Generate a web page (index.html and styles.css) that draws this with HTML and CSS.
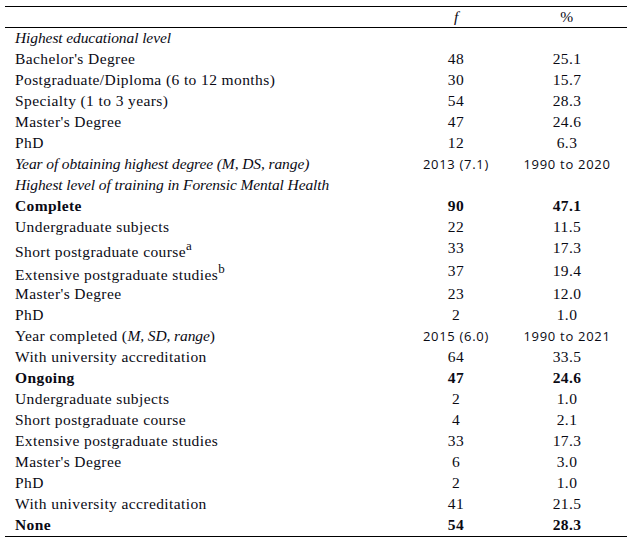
FILE: index.html
```html
<!DOCTYPE html>
<html>
<head>
<meta charset="utf-8">
<link rel="stylesheet" href="styles.css">
</head>
<body>
<table class="tbl">
  <colgroup>
    <col class="c-lbl">
    <col class="c-f">
    <col class="c-pct">
  </colgroup>
  <thead>
    <tr class="head"><th class="lbl"></th><th class="num"><i>f</i></th><th class="num pct">%</th></tr>
  </thead>
  <tbody>
    <tr><td class="lbl"><i>Highest educational level</i></td><td></td><td class="pct"></td></tr>
    <tr><td class="lbl">Bachelor's Degree</td><td class="num">48</td><td class="num pct">25.1</td></tr>
    <tr><td class="lbl">Postgraduate/Diploma (6 to 12 months)</td><td class="num">30</td><td class="num pct">15.7</td></tr>
    <tr><td class="lbl">Specialty (1 to 3 years)</td><td class="num">54</td><td class="num pct">28.3</td></tr>
    <tr><td class="lbl">Master's Degree</td><td class="num">47</td><td class="num pct">24.6</td></tr>
    <tr><td class="lbl">PhD</td><td class="num">12</td><td class="num pct">6.3</td></tr>
    <tr><td class="lbl"><i>Year of obtaining highest degree (M, DS, range)</i></td><td class="num sans">2013 (7.1)</td><td class="num pct sans">1990 to 2020</td></tr>
    <tr><td class="lbl"><i>Highest level of training in Forensic Mental Health</i></td><td></td><td class="pct"></td></tr>
    <tr class="bold"><td class="lbl">Complete</td><td class="num">90</td><td class="num pct">47.1</td></tr>
    <tr><td class="lbl">Undergraduate subjects</td><td class="num">22</td><td class="num pct">11.5</td></tr>
    <tr class="tall"><td class="lbl">Short postgraduate course<sup>a</sup></td><td class="num">33</td><td class="num pct">17.3</td></tr>
    <tr class="tall"><td class="lbl">Extensive postgraduate studies<sup>b</sup></td><td class="num">37</td><td class="num pct">19.4</td></tr>
    <tr><td class="lbl">Master's Degree</td><td class="num">23</td><td class="num pct">12.0</td></tr>
    <tr><td class="lbl">PhD</td><td class="num">2</td><td class="num pct">1.0</td></tr>
    <tr><td class="lbl">Year completed (<i>M, SD, range</i>)</td><td class="num sans">2015 (6.0)</td><td class="num pct sans">1990 to 2021</td></tr>
    <tr><td class="lbl">With university accreditation</td><td class="num">64</td><td class="num pct">33.5</td></tr>
    <tr class="bold"><td class="lbl">Ongoing</td><td class="num">47</td><td class="num pct">24.6</td></tr>
    <tr><td class="lbl">Undergraduate subjects</td><td class="num">2</td><td class="num pct">1.0</td></tr>
    <tr><td class="lbl">Short postgraduate course</td><td class="num">4</td><td class="num pct">2.1</td></tr>
    <tr><td class="lbl">Extensive postgraduate studies</td><td class="num">33</td><td class="num pct">17.3</td></tr>
    <tr><td class="lbl">Master's Degree</td><td class="num">6</td><td class="num pct">3.0</td></tr>
    <tr><td class="lbl">PhD</td><td class="num">2</td><td class="num pct">1.0</td></tr>
    <tr><td class="lbl">With university accreditation</td><td class="num">41</td><td class="num pct">21.5</td></tr>
    <tr class="bold"><td class="lbl">None</td><td class="num">54</td><td class="num pct">28.3</td></tr>
  </tbody>
</table>
</body>
</html>
```

FILE: styles.css
```css
html, body {
  margin: 0;
  padding: 0;
  background: #fff;
}
body {
  padding: 6px 0 0 5px;
}
.tbl {
  border-collapse: collapse;
  width: 622px;
  table-layout: fixed;
  font-family: "Liberation Serif", "Times New Roman", serif;
  font-size: 15.5px;
  letter-spacing: 0.4px;
  color: #0a0a14;
  border-top: 1px solid #000;
  border-bottom: 1px solid #000;
}
.c-lbl { width: 395px; }
.c-f { width: 112px; }
.c-pct { width: 115px; }
.tbl th, .tbl td {
  padding: 0;
  height: 21px;
  line-height: 20px;
  vertical-align: top;
  white-space: nowrap;
}
.tbl .lbl {
  padding-left: 10px;
  text-align: left;
}
.tbl .num {
  text-align: center;
}
.tbl .pct {
  padding-right: 5px;
}
.tbl i {
  letter-spacing: -0.1px;
}
.tbl th {
  font-weight: normal;
  height: 20px;
  line-height: 19px;
  border-bottom: 1px solid #000;
}
.tbl .bold td {
  font-weight: bold;
}
.tbl .tall td {
  height: 23px;
}
.tbl .tall td.lbl {
  padding-top: 5px;
  height: 18px;
  line-height: 18px;
}
.tbl sup {
  font-size: 13px;
  line-height: 0;
  vertical-align: 7px;
  letter-spacing: 0;
}
.tbl .sans {
  font-family: "Open Sans", "Liberation Sans", sans-serif;
  font-size: 13px;
  letter-spacing: 0.7px;
}
```
